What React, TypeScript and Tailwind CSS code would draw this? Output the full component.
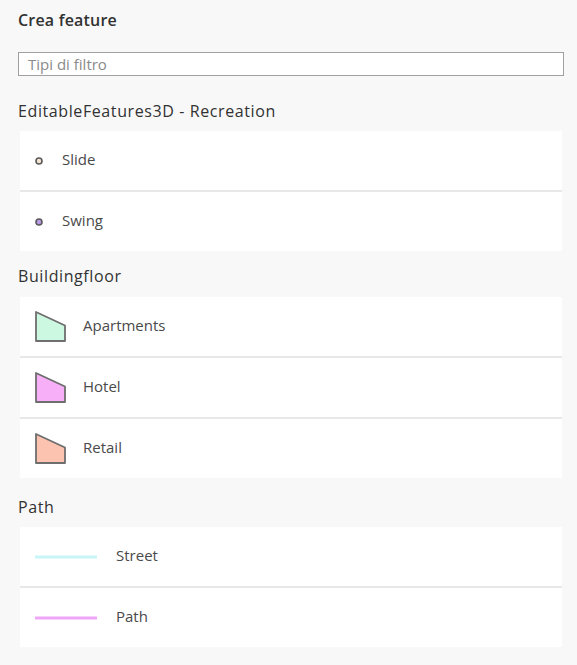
import React from 'react';

const font = { fontFamily: '"Open Sans", "Noto Sans", sans-serif' };

const PointIcon = ({ fill }: { fill: string }) => (
  <svg width="10" height="10" viewBox="0 0 10 10" className="shrink-0">
    <circle cx="5" cy="5" r="3" fill={fill} stroke="#5a5a5a" strokeWidth="1.6" />
  </svg>
);

const PolyIcon = ({ fill }: { fill: string }) => (
  <svg width="31" height="31" viewBox="0 0 31 31" className="shrink-0">
    <path d="M1 1 L30 14.5 L30 30 L1 30 Z" fill={fill} stroke="#6e6e6e" strokeWidth="1.8" strokeLinejoin="round" />
  </svg>
);

const LineIcon = ({ color }: { color: string }) => (
  <svg width="62" height="6" viewBox="0 0 62 6" className="shrink-0">
    <line x1="1" y1="3" x2="61" y2="3" stroke={color} strokeWidth="3" strokeLinecap="round" />
  </svg>
);

const Row = ({ children, last }: { children: React.ReactNode; last?: boolean }) => (
  <div className={`flex items-center ${last ? 'h-[59px]' : 'h-[61px] border-b-2 border-[#e8e8e8]'}`}>{children}</div>
);

const Heading = ({ children }: { children: React.ReactNode }) => (
  <h2 className="text-[16px] leading-5 tracking-[0.6px] text-[#323232]">{children}</h2>
);

const Label = ({ children }: { children: React.ReactNode }) => (
  <span className="text-[15px] text-[#4a4a4a] mb-[3px]">{children}</span>
);

export default function App() {
  return (
    <div className="w-[577px] h-[665px] bg-[#f8f8f8] pl-[18px] pr-[13px] pt-[10px]" style={font}>
      <h1 className="text-[16px] leading-5 font-semibold tracking-[0.2px] text-[#323232]">Crea feature</h1>

      <div className="mt-[22px] h-[24px] border border-[#a0a0a0] bg-white flex items-center pl-[9px]">
        <span className="text-[15px] text-[#8a8a8a]">Tipi di filtro</span>
      </div>

      <div className="mt-[25px] mb-[10px]">
        <Heading>EditableFeatures3D - Recreation</Heading>
      </div>
      <div className="mx-[2px] bg-white">
        <Row>
          <div className="pl-[14px] pr-[18px] flex items-center"><PointIcon fill="#f3e6d0" /></div>
          <Label>Slide</Label>
        </Row>
        <Row last>
          <div className="pl-[14px] pr-[18px] flex items-center"><PointIcon fill="#b89ae8" /></div>
          <Label>Swing</Label>
        </Row>
      </div>

      <div className="mt-[15px] mb-[11px]">
        <Heading>Buildingfloor</Heading>
      </div>
      <div className="mx-[2px] bg-white">
        <Row>
          <div className="pl-[15px] pr-[17px] flex items-center"><PolyIcon fill="#ccf8e2" /></div>
          <Label>Apartments</Label>
        </Row>
        <Row>
          <div className="pl-[15px] pr-[17px] flex items-center"><PolyIcon fill="#f7b0f7" /></div>
          <Label>Hotel</Label>
        </Row>
        <Row last>
          <div className="pl-[15px] pr-[17px] flex items-center"><PolyIcon fill="#fcc4b0" /></div>
          <Label>Retail</Label>
        </Row>
      </div>

      <div className="mt-[19px] mb-[10px]">
        <Heading>Path</Heading>
      </div>
      <div className="mx-[2px] bg-white">
        <Row>
          <div className="pl-[15px] pr-[19px] flex items-center"><LineIcon color="#c8f6f8" /></div>
          <Label>Street</Label>
        </Row>
        <Row last>
          <div className="pl-[15px] pr-[19px] flex items-center"><LineIcon color="#f0a6f6" /></div>
          <Label>Path</Label>
        </Row>
      </div>
    </div>
  );
}
